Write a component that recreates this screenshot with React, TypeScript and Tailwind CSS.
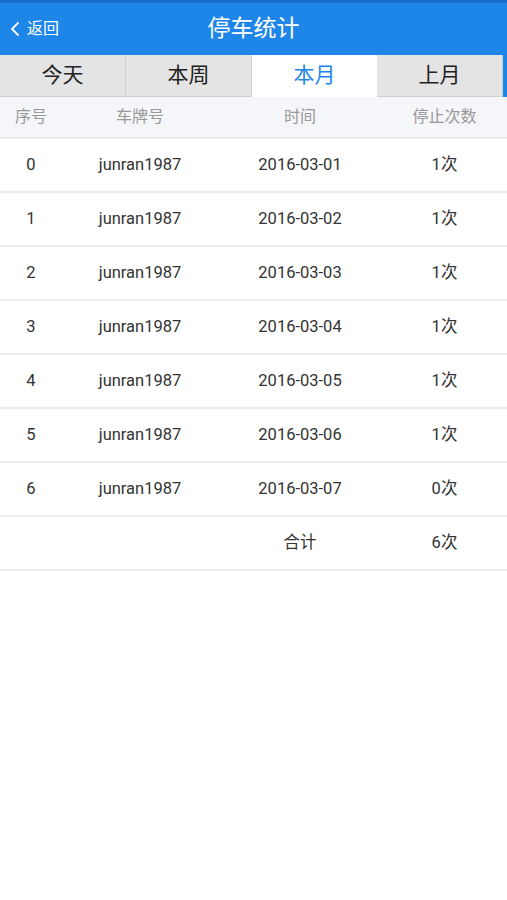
import React from "react";

const rows = [
  { no: "0", plate: "junran1987", date: "2016-03-01", count: "1次" },
  { no: "1", plate: "junran1987", date: "2016-03-02", count: "1次" },
  { no: "2", plate: "junran1987", date: "2016-03-03", count: "1次" },
  { no: "3", plate: "junran1987", date: "2016-03-04", count: "1次" },
  { no: "4", plate: "junran1987", date: "2016-03-05", count: "1次" },
  { no: "5", plate: "junran1987", date: "2016-03-06", count: "1次" },
  { no: "6", plate: "junran1987", date: "2016-03-07", count: "0次" },
];

const tabs = [
  { label: "今天", w: "w-[126px]" },
  { label: "本周", w: "w-[126px]" },
  { label: "本月", w: "w-[125px]" },
  { label: "上月", w: "w-[126px]" },
];

function Cells({ a, b, c, d }: { a: string; b: string; c: string; d: string }) {
  return (
    <>
      <div className="w-[62px] shrink-0 text-center">{a}</div>
      <div className="w-[156px] shrink-0 text-center">{b}</div>
      <div className="w-[164px] shrink-0 text-center">{c}</div>
      <div className="flex-1 text-center">{d}</div>
    </>
  );
}

export default function App() {
  return (
    <div
      className="min-h-[900px] w-[507px] bg-white"
      style={{ fontFamily: '"Roboto", "Noto Sans CJK SC", sans-serif' }}
    >
      {/* 标题栏 */}
      <div className="relative flex h-[55px] items-center justify-center border-t-[3px] border-[#1a6fc9] bg-[#1f86e9]">
        <div className="absolute left-[10px] top-0 flex h-full items-center gap-[7px] text-white">
          <svg width="10" height="16" viewBox="0 0 10 16" fill="none">
            <path d="M8.5 1.5L2 8l6.5 6.5" stroke="white" strokeWidth="1.8" />
          </svg>
          <span className="text-[16px]">返回</span>
        </div>
        <span className="text-[23px] text-white">停车统计</span>
      </div>

      {/* 标签 */}
      <div className="flex h-[42px] bg-[#1f86e9]">
        {tabs.map((t, i) => (
          <div
            key={t.label}
            className={
              i === 2
                ? `${t.w} flex items-center justify-center bg-white text-[21px] text-[#1f86e9]`
                : `${t.w} flex items-center justify-center border-r border-b border-[#cfcfcf] bg-[#e4e4e4] text-[21px] text-[#222]`
            }
          >
            {t.label}
          </div>
        ))}
      </div>

      {/* 表头 */}
      <div className="flex h-[42px] items-center border-b-2 border-[#ececec] bg-[#f5f6fa] text-[16px] text-[#999]">
        <Cells a="序号" b="车牌号" c="时间" d="停止次数" />
      </div>

      {rows.map((r) => (
        <div key={r.no} className="flex h-[54px] items-center border-b-2 border-[#ececec] text-[16.5px] text-[#333]">
          <Cells a={r.no} b={r.plate} c={r.date} d={r.count} />
        </div>
      ))}

      <div className="flex h-[54px] items-center border-b-2 border-[#ececec] text-[16.5px] text-[#333]">
        <Cells a="" b="" c="合计" d="6次" />
      </div>
    </div>
  );
}
